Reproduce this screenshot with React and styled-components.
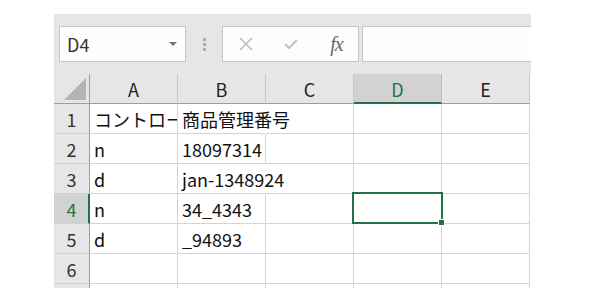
import React from "react";
import styled, { createGlobalStyle } from "styled-components";

const GlobalStyle = createGlobalStyle`
  body {
    margin: 0;
    background: #ffffff;
    font-family: "Noto Sans CJK JP", "Noto Sans", sans-serif;
  }
`;

const GREEN = "#217346";

// Excel window region
const Window = styled.div`
  margin: 14px 0 0 54px;
  width: 477px;
  height: 274px;
  overflow: hidden;
  background: #e6e6e6;
`;

const Toolbar = styled.div`
  height: 60px;
  display: flex;
  align-items: center;
  padding-left: 5px;
  box-sizing: border-box;
`;

const NameBox = styled.div`
  width: 127px;
  height: 36px;
  box-sizing: border-box;
  border: 1px solid #c6c6c6;
  background: #fdfdfd;
  display: flex;
  align-items: center;
  justify-content: space-between;
  padding: 0 8px 0 7px;
  font-size: 18px;
  color: #333;
`;

const Caret = styled.span`
  width: 0;
  height: 0;
  border-left: 4px solid transparent;
  border-right: 4px solid transparent;
  border-top: 4px solid #777;
`;

const Grip = styled.div`
  margin-left: 17px;
  display: flex;
  flex-direction: column;
  gap: 2px;

  span {
    width: 3px;
    height: 3px;
    background: #ababab;
  }
`;

const FormulaButtons = styled.div`
  margin-left: 16px;
  width: 137px;
  height: 36px;
  box-sizing: border-box;
  border: 1px solid #c6c6c6;
  background: #fdfdfd;
  display: grid;
  grid-template-columns: repeat(3, 45px);
  align-items: center;
  justify-items: center;
`;

const Fx = styled.span`
  font-family: "Liberation Serif", serif;
  font-style: italic;
  font-size: 20px;
  color: #666;
  letter-spacing: -1px;
  margin-left: 2px;
`;

const FormulaInput = styled.div`
  margin-left: 3px;
  flex: 1;
  height: 36px;
  box-sizing: border-box;
  border: 1px solid #c6c6c6;
  border-right: none;
  background: #fdfdfd;
`;

const Grid = styled.div`
  display: grid;
  grid-template-columns: 36px repeat(5, 88px);
  grid-auto-rows: 30px;
  background: #ffffff;
`;

const Corner = styled.div`
  background: #e6e6e6;
  border-right: 1px solid #9e9e9e;
  border-bottom: 1px solid #9e9e9e;
  position: relative;

  &::after {
    content: "";
    position: absolute;
    right: 3px;
    bottom: 3px;
    border-left: 22px solid transparent;
    border-bottom: 22px solid #b4b4b4;
  }
`;

const ColHead = styled.div`
  background: ${(p) => (p.active ? "#d2d2d2" : "#e6e6e6")};
  border-right: 1px solid ${(p) => (p.active ? "#bdbdbd" : "#c8c8c8")};
  border-bottom: ${(p) => (p.active ? `2px solid ${GREEN}` : "1px solid #9e9e9e")};
  display: flex;
  align-items: center;
  justify-content: center;
  font-size: 18px;
  color: ${(p) => (p.active ? GREEN : "#222")};
  padding-top: ${(p) => (p.active ? "1px" : "0")};
`;

const RowHead = styled.div`
  background: ${(p) => (p.active ? "#d2d2d2" : "#e6e6e6")};
  border-right: ${(p) => (p.active ? `2px solid ${GREEN}` : "1px solid #9e9e9e")};
  border-bottom: 1px solid #d0d0d0;
  display: flex;
  align-items: center;
  justify-content: center;
  font-size: 18px;
  color: ${(p) => (p.active ? GREEN : "#333")};
  padding-left: ${(p) => (p.active ? "1px" : "0")};
`;

// spill: text runs on into the empty cell to the right, as Excel does
const Cell = styled.div`
  position: relative;
  border-right: 1px solid ${(p) => (p.spill ? "transparent" : "#d4d4d4")};
  border-bottom: 1px solid #d4d4d4;
  display: flex;
  align-items: center;
  padding: 1px 0 0 4px;
  font-size: 18px;
  color: #111;
  white-space: nowrap;
  overflow: ${(p) => (p.spill || p.selected ? "visible" : "hidden")};
  z-index: ${(p) => (p.selected ? 2 : p.spill ? 1 : 0)};
`;

const Selection = styled.div`
  position: absolute;
  left: -2px;
  top: -2px;
  width: 91px;
  height: 32px;
  box-sizing: border-box;
  border: 2px solid ${GREEN};
  pointer-events: none;
`;

const FillHandle = styled.div`
  position: absolute;
  right: -4px;
  bottom: -4px;
  width: 5px;
  height: 5px;
  background: ${GREEN};
  border: 1px solid #ffffff;
`;

const columns = ["A", "B", "C", "D", "E"];
const rows = [
  { a: "コントロールフラグ", b: "商品管理番号", spill: true },
  { a: "n", b: "18097314" },
  { a: "d", b: "jan-1348924", spill: true },
  { a: "n", b: "34_4343" },
  { a: "d", b: "_94893" },
  { a: "", b: "" },
  { a: "", b: "" },
];

const App = () => (
  <>
    <GlobalStyle />
    <Window>
      <Toolbar>
        <NameBox>
          <span>D4</span>
          <Caret />
        </NameBox>
        <Grip>
          <span />
          <span />
          <span />
        </Grip>
        <FormulaButtons>
          <svg width="14" height="14" viewBox="0 0 14 14">
            <path d="M1 1L13 13M13 1L1 13" stroke="#bdbdbd" strokeWidth="1.6" fill="none" />
          </svg>
          <svg width="14" height="12" viewBox="0 0 14 12">
            <path d="M1 6L5 10L13 2" stroke="#c4c4c4" strokeWidth="2" fill="none" />
          </svg>
          <Fx>fx</Fx>
        </FormulaButtons>
        <FormulaInput />
      </Toolbar>
      <Grid>
        <Corner />
        {columns.map((c) => (
          <ColHead key={c} active={c === "D"}>
            {c}
          </ColHead>
        ))}
        {rows.map((r, i) => (
          <React.Fragment key={i}>
            <RowHead active={i === 3}>{i + 1}</RowHead>
            <Cell>{r.a}</Cell>
            <Cell spill={r.spill}>{r.b}</Cell>
            <Cell />
            <Cell selected={i === 3}>
              {i === 3 && (
                <Selection>
                  <FillHandle />
                </Selection>
              )}
            </Cell>
            <Cell />
          </React.Fragment>
        ))}
      </Grid>
    </Window>
  </>
);

export default App;
